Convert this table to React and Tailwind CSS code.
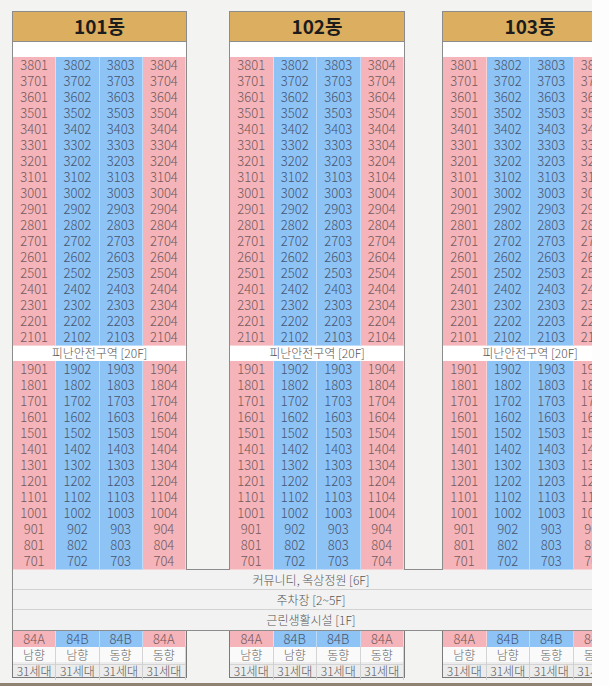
const floorsUpper = Array.from({ length: 18 }, (_, i) => 38 - i)
const floorsLower = Array.from({ length: 13 }, (_, i) => 19 - i)

const buildings = [
  { name: '101동', className: 'ml-0 w-[175px]' },
  { name: '102동', className: 'ml-[42px] w-[176px]' },
  { name: '103동', className: 'ml-[37px] w-[176px]' },
]

const units = [
  { type: '84A', dir: '남향', color: 'pink' },
  { type: '84B', dir: '남향', color: 'blue' },
  { type: '84B', dir: '동향', color: 'blue' },
  { type: '84A', dir: '동향', color: 'pink' },
]

const cellColor = {
  pink: 'bg-[#f5b4b9] text-[#735a5d]',
  blue: 'bg-[#8ec3f6] text-[#465570]',
}

function FloorRow({ floor }) {
  return (
    <div className="grid h-4 grid-cols-4">
      {units.map((u, i) => (
        <div
          key={i}
          className={`flex items-center justify-center border-b border-r border-white/40 text-[13px] font-light leading-4 ${cellColor[u.color]}`}
        >
          {floor}
          {String(i + 1).padStart(2, '0')}
        </div>
      ))}
    </div>
  )
}

function BuildingTop({ name, className }) {
  return (
    <div className={`shrink-0 border-x border-t border-[#8c8c8c] ${className}`}>
      <div className="flex h-[30px] items-center justify-center border-b border-[#8c8c8c] bg-[#dcae5f] text-[19px] font-bold text-[#1c1c1c]">
        {name}
      </div>
      <div className="h-[15px] bg-white" />
      {floorsUpper.map((f) => (
        <FloorRow key={f} floor={f} />
      ))}
      <div className="flex h-4 items-center justify-center bg-white text-[12px] font-light text-[#555]">
        피난안전구역 [20F]
      </div>
      {floorsLower.map((f) => (
        <FloorRow key={f} floor={f} />
      ))}
    </div>
  )
}

function BuildingBottom({ className }) {
  return (
    <div className={`shrink-0 border-x border-b border-[#7a7a7a] ${className}`}>
      <div className="grid h-[15px] grid-cols-4">
        {units.map((u, i) => (
          <div
            key={i}
            className={`flex items-center justify-center border-r border-white/40 text-[13px] font-light leading-4 ${cellColor[u.color]}`}
          >
            {u.type}
          </div>
        ))}
      </div>
      <div className="grid h-4 grid-cols-4 bg-[#fafafa]">
        {units.map((u, i) => (
          <div
            key={i}
            className="flex items-center justify-center border-r border-b border-[#d4d4d4] text-[12px] font-light text-[#666]"
          >
            {u.dir}
          </div>
        ))}
      </div>
      <div className="grid h-[15px] grid-cols-4 bg-[#ececec]">
        {units.map((u, i) => (
          <div
            key={i}
            className="flex items-center justify-center border-r border-[#d0d0d0] text-[12px] font-light text-[#555]"
          >
            31세대
          </div>
        ))}
      </div>
    </div>
  )
}

const bands = ['커뮤니티, 옥상정원 [6F]', '주차장 [2~5F]', '근린생활시설 [1F]']

export default function App() {
  return (
    <div
      className="h-[686px] w-[609px] overflow-hidden bg-[#fdfdfd]"
      style={{ fontFamily: '"Noto Sans CJK KR", "Noto Sans", sans-serif' }}
    >
      <div className="h-[686px] w-[592px] overflow-hidden border-b-[3px] border-[#8f8272] bg-[#f3f3f1] pl-3 pt-[11px]">
        <div className="flex w-[640px]">
          {buildings.map((b) => (
            <BuildingTop key={b.name} {...b} />
          ))}
        </div>
        <div className="w-[597px] border-y border-l border-[#8c8c8c] bg-[#f2f2f2]">
          {bands.map((t, i) => (
            <div
              key={t}
              className={`flex h-[20px] items-center justify-center text-[12px] font-light text-[#555] ${
                i < bands.length - 1 ? 'border-b border-[#d2d2d2]' : ''
              }`}
            >
              {t}
            </div>
          ))}
        </div>
        <div className="flex w-[640px]">
          {buildings.map((b) => (
            <BuildingBottom key={b.name} className={b.className} />
          ))}
        </div>
      </div>
    </div>
  )
}
